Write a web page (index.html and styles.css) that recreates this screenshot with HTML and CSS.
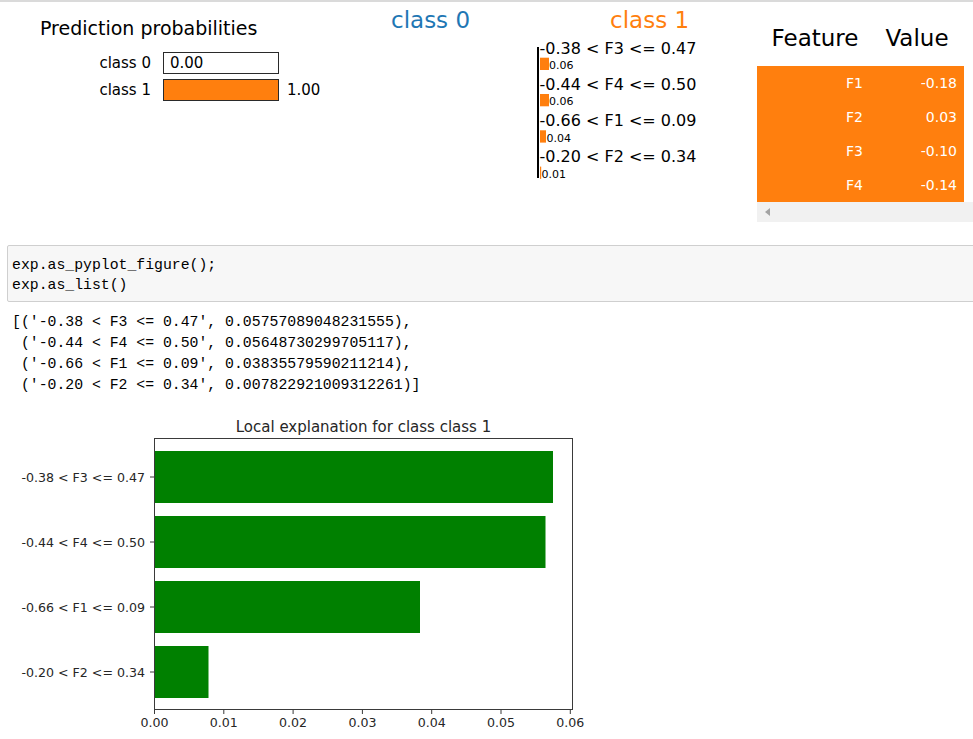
FILE: index.html
```html
<!DOCTYPE html>
<html>
<head>
<meta charset="utf-8">
<link rel="stylesheet" href="styles.css">
</head>
<body>
<div class="topline"></div>
<div class="lime">
  <div class="probs">
    <div class="ptitle">Prediction probabilities</div>
    <div class="prows">
      <div class="prow"><span class="plabel">class 0</span><div class="pbar"><span class="pin">0.00</span></div></div>
      <div class="prow"><span class="plabel">class 1</span><div class="pbar filled"></div><span class="pval">1.00</span></div>
    </div>
  </div>
  <div class="explain">
    <div class="heads"><span class="c0">class 0</span><span class="c1">class 1</span></div>
    <svg class="featsvg" width="387" height="150" viewBox="0 0 387 150">
      <rect x="167" y="13" width="2" height="131" fill="#000"/>
      <text class="ft" x="169.5" y="19.5">-0.38 &lt; F3 &lt;= 0.47</text>
      <rect x="170" y="23.7" width="9" height="12.3" fill="#ff7f0e"/>
      <text class="fv" x="179" y="35">0.06</text>
      <text class="ft" x="169.5" y="55.8">-0.44 &lt; F4 &lt;= 0.50</text>
      <rect x="170" y="60" width="9" height="12.3" fill="#ff7f0e"/>
      <text class="fv" x="179" y="71.3">0.06</text>
      <text class="ft" x="169.5" y="92.1">-0.66 &lt; F1 &lt;= 0.09</text>
      <rect x="170" y="96.3" width="6" height="12.3" fill="#ff7f0e"/>
      <text class="fv" x="176.5" y="107.6">0.04</text>
      <text class="ft" x="169.5" y="128.4">-0.20 &lt; F2 &lt;= 0.34</text>
      <rect x="170" y="132.6" width="1.2" height="12.3" fill="#ff7f0e"/>
      <text class="fv" x="171.5" y="143.9">0.01</text>
    </svg>
  </div>
  <div class="tbl">
    <table class="ftable">
      <colgroup><col class="col1"><col class="col2"></colgroup>
      <thead><tr><th class="th1">Feature</th><th>Value</th></tr></thead>
      <tbody>
        <tr><td>F1</td><td>-0.18</td></tr>
        <tr><td>F2</td><td>0.03</td></tr>
        <tr><td>F3</td><td>-0.10</td></tr>
        <tr><td>F4</td><td>-0.14</td></tr>
      </tbody>
    </table>
    <div class="hscroll"><span class="arrow"></span></div>
  </div>
</div>
<div class="codecell"><pre class="code">exp.as_pyplot_figure();
exp.as_list()</pre></div>
<pre class="output">[('-0.38 &lt; F3 &lt;= 0.47', 0.05757089048231555),
 ('-0.44 &lt; F4 &lt;= 0.50', 0.05648730299705117),
 ('-0.66 &lt; F1 &lt;= 0.09', 0.03835579590211214),
 ('-0.20 &lt; F2 &lt;= 0.34', 0.007822921009312261)]</pre>
<svg class="chart" width="600" height="339" viewBox="0 0 600 339">
  <text class="ctitle" x="363.5" y="32" text-anchor="middle">Local explanation for class class 1</text>
  <rect x="154.5" y="51" width="398.5" height="52" fill="#008000"/>
  <rect x="154.5" y="116" width="391" height="52" fill="#008000"/>
  <rect x="154.5" y="181" width="265.5" height="52" fill="#008000"/>
  <rect x="154.5" y="246" width="54" height="52" fill="#008000"/>
  <rect x="154.5" y="38.5" width="418" height="271" fill="none" stroke="#3a3a3a" stroke-width="1"/>
  <g stroke="#3a3a3a" stroke-width="1">
    <line x1="150" y1="77" x2="154" y2="77"/>
    <line x1="150" y1="142" x2="154" y2="142"/>
    <line x1="150" y1="207" x2="154" y2="207"/>
    <line x1="150" y1="272" x2="154" y2="272"/>
    <line x1="154.5" y1="310" x2="154.5" y2="314"/>
    <line x1="223.8" y1="310" x2="223.8" y2="314"/>
    <line x1="293.1" y1="310" x2="293.1" y2="314"/>
    <line x1="362.4" y1="310" x2="362.4" y2="314"/>
    <line x1="431.7" y1="310" x2="431.7" y2="314"/>
    <line x1="501" y1="310" x2="501" y2="314"/>
    <line x1="570.3" y1="310" x2="570.3" y2="314"/>
  </g>
  <g class="ytl" text-anchor="end">
    <text x="145" y="81.5">-0.38 &lt; F3 &lt;= 0.47</text>
    <text x="145" y="146.5">-0.44 &lt; F4 &lt;= 0.50</text>
    <text x="145" y="211.5">-0.66 &lt; F1 &lt;= 0.09</text>
    <text x="145" y="276.5">-0.20 &lt; F2 &lt;= 0.34</text>
  </g>
  <g class="xtl" text-anchor="middle">
    <text x="154.5" y="326.5">0.00</text>
    <text x="223.8" y="326.5">0.01</text>
    <text x="293.1" y="326.5">0.02</text>
    <text x="362.4" y="326.5">0.03</text>
    <text x="431.7" y="326.5">0.04</text>
    <text x="501" y="326.5">0.05</text>
    <text x="570.3" y="326.5">0.06</text>
  </g>
</svg>
</body>
</html>
```
FILE: styles.css
```css
html, body {
  margin: 0;
  padding: 0;
  overflow: hidden;
}
body {
  width: 973px;
  height: 739px;
  font-family: "DejaVu Sans", sans-serif;
  color: #000;
  background: #fff;
}
.topline {
  height: 2px;
  background: #dadada;
}
.lime {
  display: flex;
  height: 220px;
}
.probs {
  width: 370px;
  flex: none;
}
.ptitle {
  font-size: 19px;
  line-height: 22px;
  margin: 15px 0 0 40px;
}
.prows {
  display: flex;
  flex-direction: column;
  gap: 5px;
  margin-top: 13px;
}
.prow {
  display: flex;
  align-items: center;
  height: 22px;
  font-size: 15px;
}
.plabel {
  width: 151px;
  text-align: right;
  margin-right: 12px;
}
.pbar {
  width: 114px;
  height: 20px;
  border: 1px solid #2a2a2a;
  line-height: 20px;
}
.pbar.filled {
  background: #ff7f0e;
}
.pin {
  padding-left: 6px;
}
.pval {
  margin-left: 8px;
}
.explain {
  width: 387px;
  flex: none;
}
.heads {
  display: flex;
  font-size: 23px;
  line-height: 27px;
  margin-top: 5px;
}
.c0 {
  color: #1f77b4;
  margin-left: 21px;
}
.c1 {
  color: #ff7f0e;
  margin-left: 140px;
}
.featsvg {
  display: block;
}
.ft {
  font-family: "DejaVu Sans", sans-serif;
  font-size: 16px;
  fill: #000;
}
.fv {
  font-family: "DejaVu Sans", sans-serif;
  font-size: 11px;
  fill: #000;
}
.tbl {
  width: 216px;
  flex: none;
}
.ftable {
  border-collapse: collapse;
  width: 207px;
  margin-top: 16px;
  table-layout: fixed;
}
.col1 {
  width: 113px;
}
.col2 {
  width: 94px;
}
.ftable th {
  font-weight: normal;
  font-size: 23px;
  line-height: 27px;
  padding: 7px 0 14px;
  text-align: center;
}
.ftable .th1 {
  padding-left: 3px;
}
.ftable td {
  background: #ff7f0e;
  color: #fff;
  font-size: 14px;
  height: 34px;
  padding: 0 7px;
  text-align: right;
  box-sizing: border-box;
}
.hscroll {
  height: 20px;
  background: #f1f1f1;
  position: relative;
}
.arrow {
  position: absolute;
  left: 8px;
  top: 6px;
  width: 0;
  height: 0;
  border-right: 5px solid #a3a3a3;
  border-top: 4.5px solid transparent;
  border-bottom: 4.5px solid transparent;
}
.codecell {
  margin: 23px -10px 0 7px;
  border: 1px solid #cfcfcf;
  border-radius: 2px;
  background: #f7f7f7;
  padding: 9px 4px 6px;
}
.code, .output {
  font-family: "Liberation Mono", monospace;
  font-size: 14.8px;
  margin: 0;
  color: #000;
}
.code {
  line-height: 20px;
}
.output {
  line-height: 21px;
  margin: 10px 0 0 12px;
}
.chart {
  display: block;
  margin-top: 4px;
}
.ctitle {
  font-family: "DejaVu Sans", sans-serif;
  font-size: 15px;
  fill: #262626;
}
.ytl text, .xtl text {
  font-family: "DejaVu Sans", sans-serif;
  font-size: 12.6px;
  fill: #262626;
}
```
